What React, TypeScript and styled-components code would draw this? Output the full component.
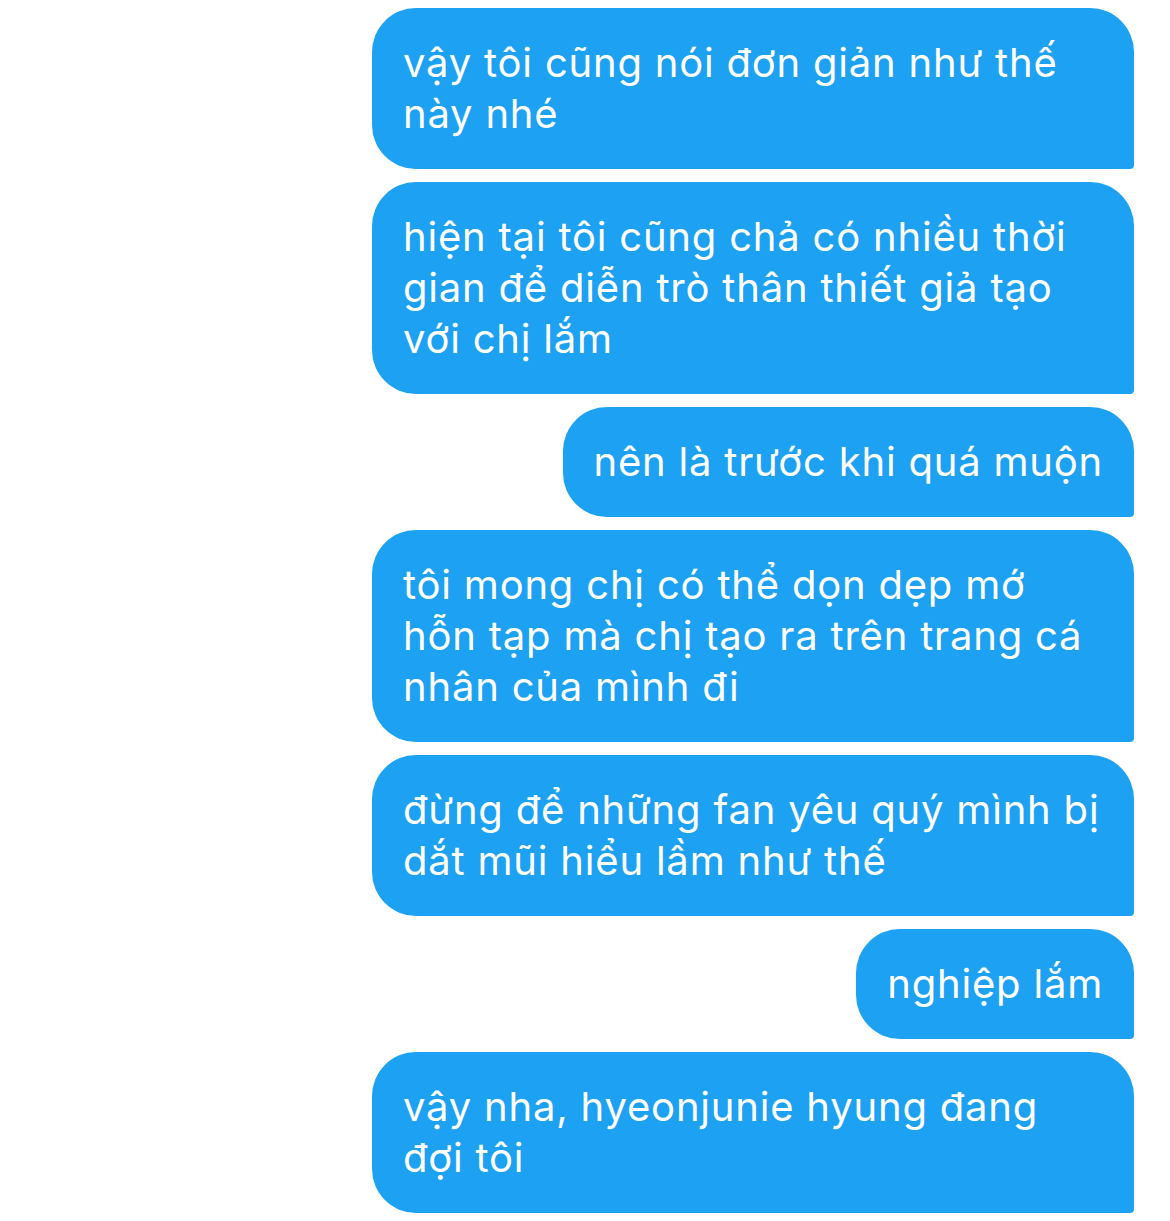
import React from "react";
import styled, { createGlobalStyle } from "styled-components";

const Global = createGlobalStyle`
  html, body { margin: 0; padding: 0; background: #ffffff; }
  body { font-family: Inter, "Noto Sans", "Liberation Sans", sans-serif; }
`;

const Thread = styled.div`
  display: flex;
  flex-direction: column;
  align-items: flex-end;
  gap: 13px;
  padding: 8px 36px 8px 0;
`;

const Bubble = styled.div`
  box-sizing: border-box;
  max-width: 762px;
  background: #1da1f2;
  color: #ffffff;
  font-size: 40px;
  line-height: 51px;
  padding: 29px 31px 30px 31px;
  border-radius: 44px 44px 4px 44px;
  letter-spacing: 0.8px;
`;

const messages = [
  "vậy tôi cũng nói đơn giản như thế này nhé",
  "hiện tại tôi cũng chả có nhiều thời gian để diễn trò thân thiết giả tạo với chị lắm",
  "nên là trước khi quá muộn",
  "tôi mong chị có thể dọn dẹp mớ hỗn tạp mà chị tạo ra trên trang cá nhân của mình đi",
  "đừng để những fan yêu quý mình bị dắt mũi hiểu lầm như thế",
  "nghiệp lắm",
  "vậy nha, hyeonjunie hyung đang đợi tôi",
];

export default function App() {
  return (
    <>
      <Global />
      <Thread>
        {messages.map((m, i) => (
          <Bubble key={i}>{m}</Bubble>
        ))}
      </Thread>
    </>
  );
}
